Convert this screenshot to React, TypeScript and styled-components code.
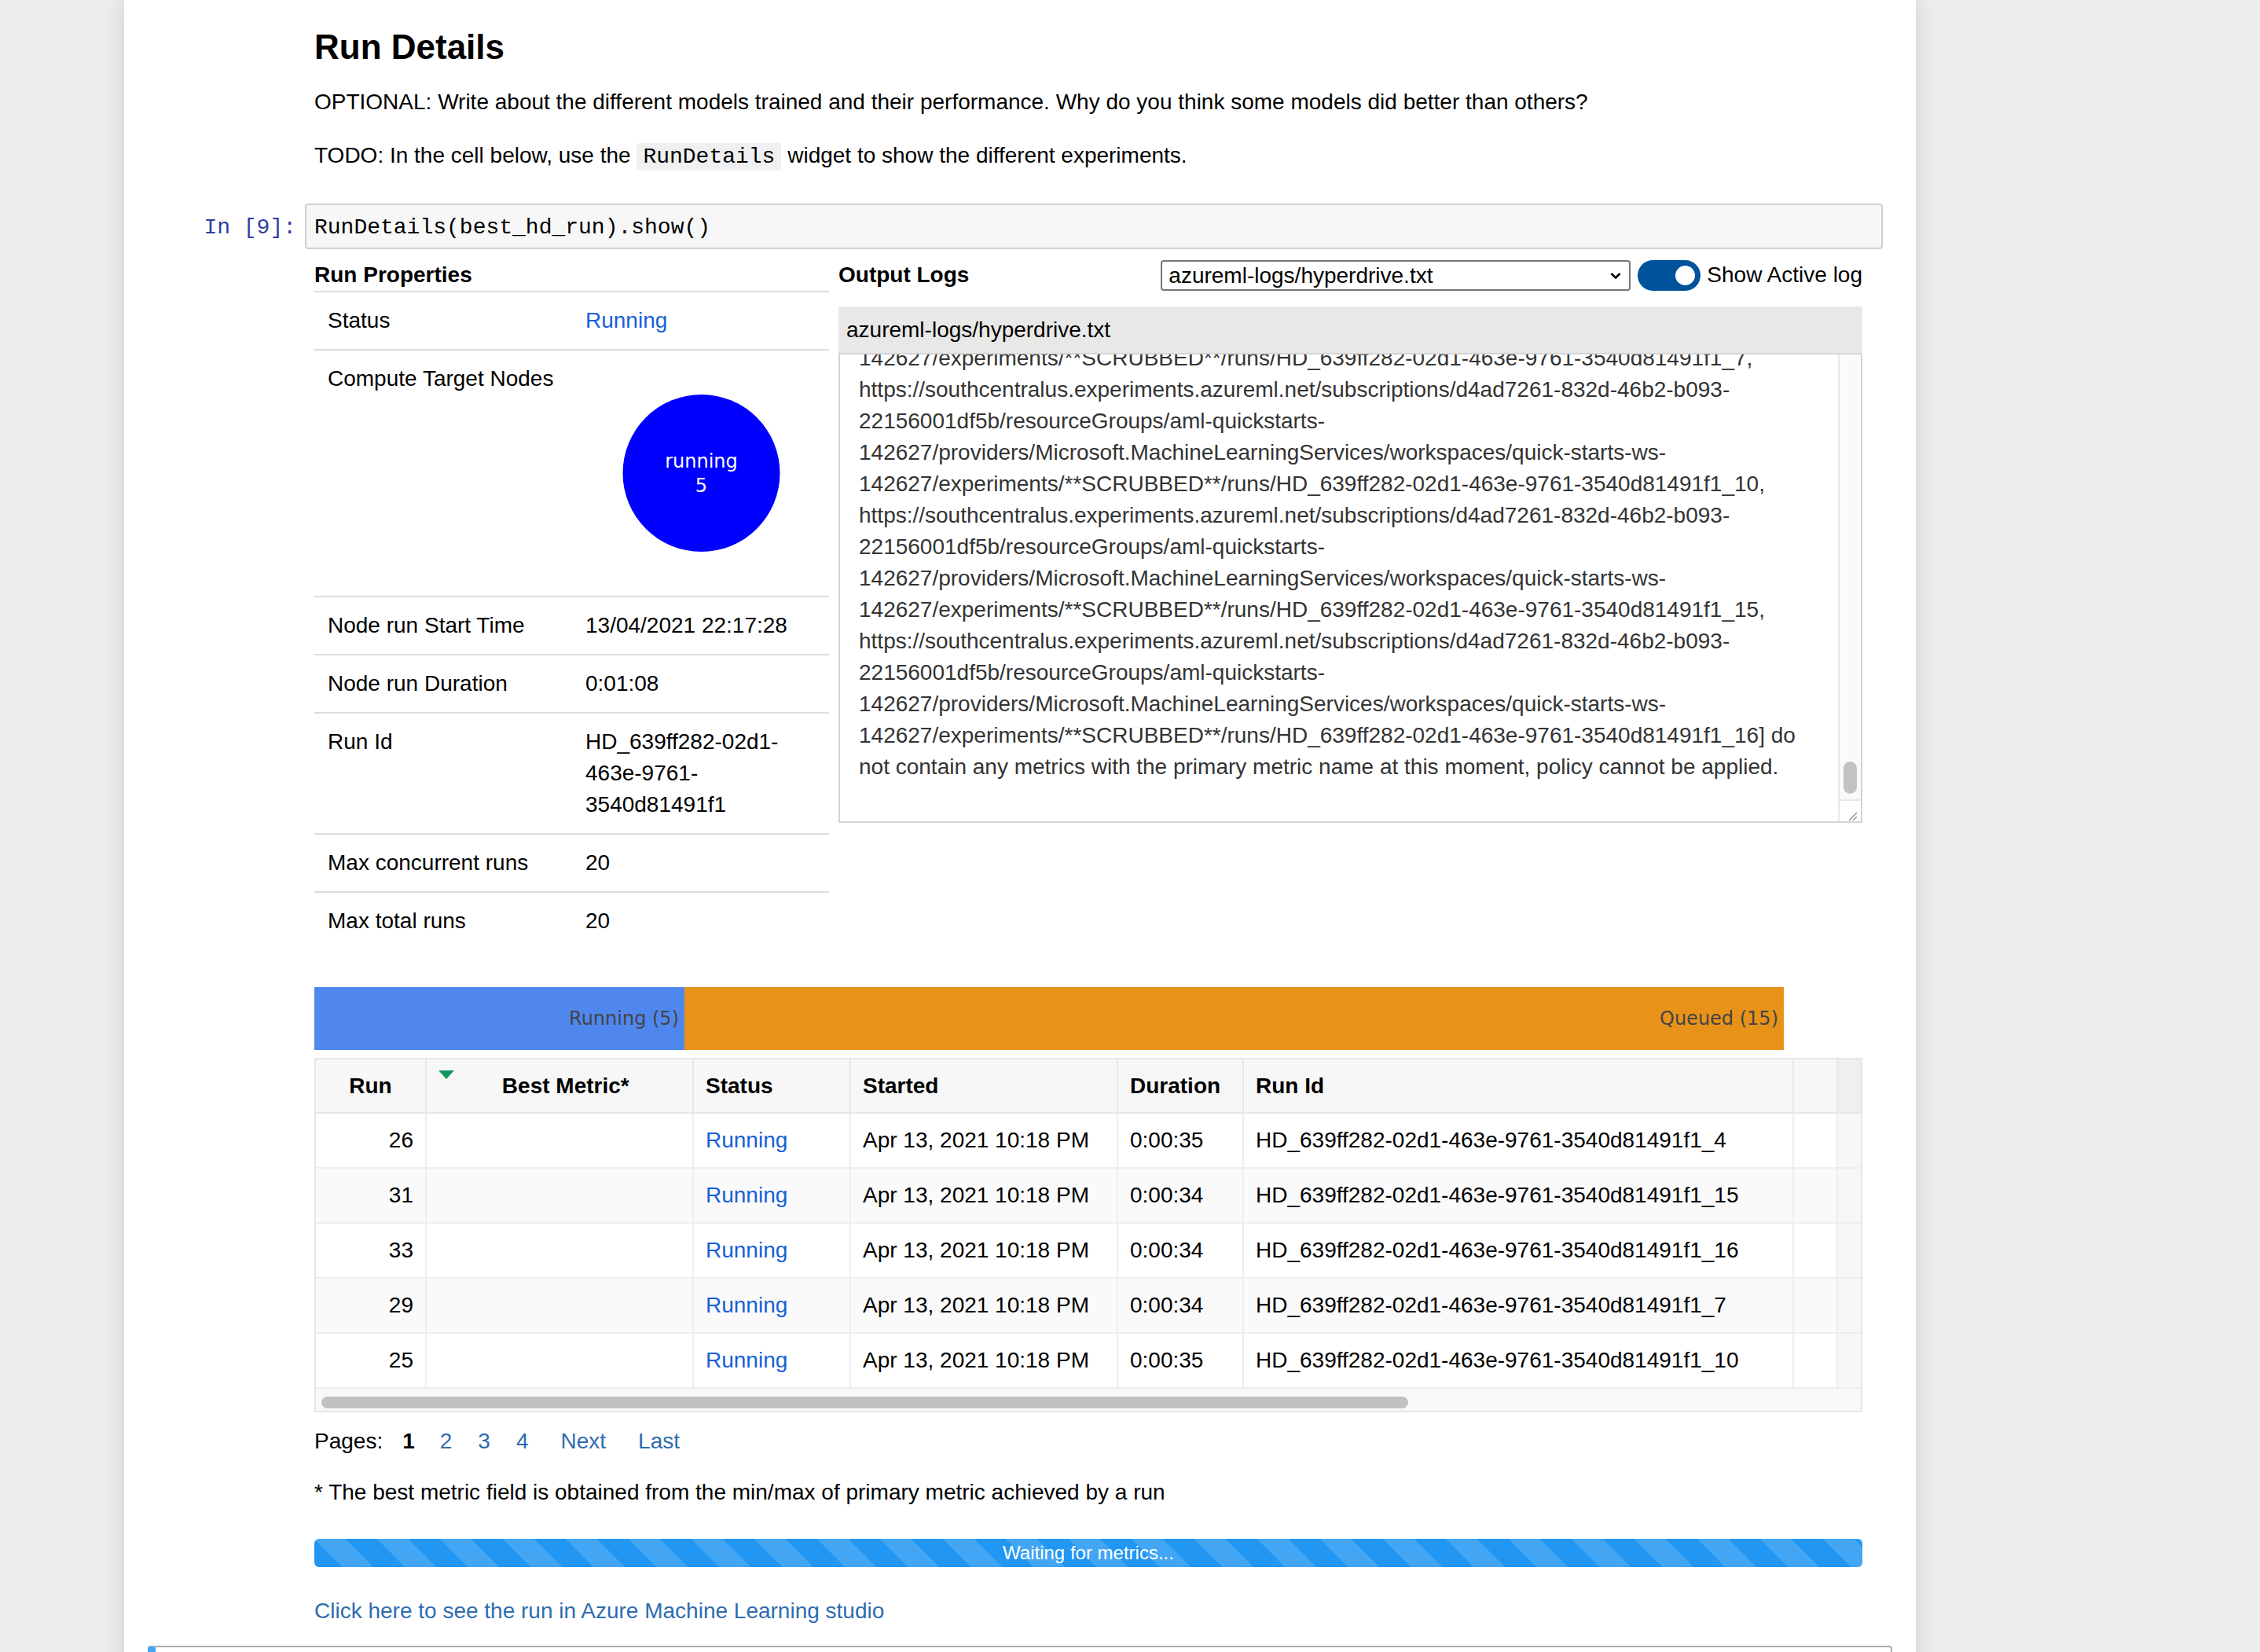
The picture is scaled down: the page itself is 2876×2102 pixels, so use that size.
import React from "react";
import styled, { createGlobalStyle } from "styled-components";

const sans = `"Liberation Sans", Arial, Helvetica, sans-serif`;
const mono = `"Liberation Mono", "Courier New", monospace`;
const verdana = `"DejaVu Sans", Verdana, sans-serif`;
const linkBlue = "#2d6cb0";
const runBlue = "#1660d8";
const cols = "141px 340px 200px 340px 160px 700px 56px 1fr";

const GlobalStyle = createGlobalStyle`
  * { box-sizing: border-box; }
  html, body { margin: 0; padding: 0; background: #eeeeee; }
  body { font-family: ${sans}; font-size: 28px; line-height: 40px; color: #000; }
`;

const Page = styled.div`
  display: flex;
  min-height: 2102px;
`;

const Notebook = styled.main`
  margin-left: 158px;
  width: 2280px;
  min-height: 2102px;
  background: #fff;
  box-shadow: 0 0 24px 2px rgba(87, 87, 87, 0.2);
  padding: 0 30px;
  display: flex;
  flex-direction: column;
  overflow: hidden;
`;

const MarkdownCell = styled.section`
  display: flex;
  flex-direction: column;
  padding: 0 12px 0 212px;
`;

const Heading = styled.h2`
  margin: 36px 0 0;
  font-size: 44px;
  line-height: 48px;
  font-weight: 700;
`;

const Para = styled.p<{ $gap: number }>`
  margin: ${(p) => p.$gap}px 0 0;
  font-size: 28px;
  line-height: 40px;
`;

const InlineCode = styled.code`
  font-family: ${mono};
  font-size: 28px;
  background: #eff0f1;
  padding: 2px 8px;
  border-radius: 4px;
`;

const CodeCell = styled.section`
  display: flex;
  margin-top: 39px;
  padding: 0 12px;
`;

const Prompt = styled.div`
  flex: none;
  width: 188px;
  padding: 14px 11px 0 0;
  text-align: right;
  font-family: ${mono};
  font-size: 28px;
  line-height: 34px;
  color: #303f9f;
`;

const InputArea = styled.div`
  flex: 1;
  height: 58px;
  border: 2px solid #cfcfcf;
  border-radius: 4px;
  background: #f7f7f7;
  padding: 12px 10px 0;
  font-family: ${mono};
  font-size: 28px;
  line-height: 34px;
`;

const Output = styled.section`
  display: flex;
  flex-direction: column;
  margin-top: 13px;
  padding: 0 38px 0 212px;
`;

const WidgetTop = styled.div`
  display: grid;
  grid-template-columns: 655px 1fr;
  column-gap: 12px;
  align-items: start;
`;

const Panel = styled.div`
  display: flex;
  flex-direction: column;
`;

const PanelTitle = styled.div<{ $rule?: boolean }>`
  font-weight: 700;
  line-height: 40px;
  border-bottom: ${(p) => (p.$rule ? "2px solid #dddddd" : "none")};
`;

const PropRow = styled.div`
  display: grid;
  grid-template-columns: 345px 1fr;
  padding: 16px 0;
  border-bottom: 2px solid #dddddd;
  &:last-child {
    border-bottom: none;
  }
`;

const PropLabel = styled.div`
  padding-left: 17px;
`;

const PropValue = styled.div<{ $status?: boolean }>`
  color: ${(p) => (p.$status ? runBlue : "#000")};
`;

const ChartSvg = styled.svg`
  display: block;
`;

const LogsHeader = styled.div`
  display: flex;
  align-items: center;
  height: 40px;
`;

const LogsTitle = styled.div`
  flex: 1;
  font-weight: 700;
`;

const SelectWrap = styled.div`
  position: relative;
  width: 598px;
  height: 39px;
`;

const LogSelect = styled.select`
  appearance: none;
  width: 100%;
  height: 100%;
  border: 2px solid #767676;
  border-radius: 4px;
  background: #fff;
  padding: 0 40px 0 8px;
  font-family: ${sans};
  font-size: 28px;
  color: #000;
`;

const Chevron = styled.svg`
  position: absolute;
  right: 12px;
  top: 15px;
  pointer-events: none;
`;

const Toggle = styled.span`
  position: relative;
  flex: none;
  width: 80px;
  height: 39px;
  margin-left: 9px;
  border-radius: 20px;
  background: #00539b;
`;

const Knob = styled.span`
  position: absolute;
  right: 7px;
  top: 7px;
  width: 25px;
  height: 25px;
  border-radius: 50%;
  background: #fff;
`;

const ToggleLabel = styled.span`
  margin-left: 8px;
  white-space: nowrap;
`;

const LogTitleBar = styled.div`
  margin-top: 20px;
  height: 59px;
  background: #e8e8e7;
  padding-left: 10px;
  display: flex;
  align-items: center;
`;

const LogBox = styled.div`
  position: relative;
  height: 598px;
  border: 2px solid #d4d4d4;
  overflow: hidden;
`;

const LogText = styled.div`
  margin-top: -15px;
  padding: 0 40px 0 24px;
  color: #333;
  line-height: 40px;
  white-space: nowrap;
`;

const ScrollTrack = styled.div`
  position: absolute;
  right: 0;
  top: 0;
  bottom: 28px;
  width: 29px;
  border-left: 2px solid #e8e8e8;
  background: #fafafa;
`;

const ScrollThumb = styled.div`
  position: absolute;
  left: 5px;
  bottom: 7px;
  width: 17px;
  height: 41px;
  border-radius: 9px;
  background: #c2c2c2;
`;

const ResizeCorner = styled.div`
  position: absolute;
  right: 0;
  bottom: 0;
  width: 29px;
  height: 28px;
  border-left: 2px solid #e8e8e8;
  border-top: 2px solid #e8e8e8;
  background: #fff;
`;

const StatusBar = styled.div`
  margin-top: 48px;
  width: 1870px;
  height: 80px;
  display: flex;
`;

const StatusSegment = styled.div<{ $color: string; $grow: number }>`
  flex: ${(p) => p.$grow};
  background: ${(p) => p.$color};
  display: flex;
  align-items: center;
  justify-content: flex-end;
  padding-right: 7px;
  font-family: ${verdana};
  font-size: 24px;
  color: #444;
`;

const RunsTable = styled.div`
  margin-top: 10px;
  border: 2px solid #e6e6e6;
  display: flex;
  flex-direction: column;
`;

const HeaderRow = styled.div`
  display: grid;
  grid-template-columns: ${cols};
  height: 69px;
  background: #f7f7f7;
  border-bottom: 2px solid #e6e6e6;
  font-weight: 700;
`;

const HeaderCell = styled.div<{ $align?: "center" | "left" }>`
  position: relative;
  display: flex;
  align-items: center;
  justify-content: ${(p) => (p.$align === "center" ? "center" : "flex-start")};
  padding: 0 15px;
  border-right: 2px solid #e8e8e8;
`;

const SortArrow = styled.svg`
  position: absolute;
  left: 15px;
  top: 14px;
`;

const Gutter = styled.div<{ $head?: boolean }>`
  background: ${(p) => (p.$head ? "#efefef" : "#f7f7f7")};
`;

const BodyRow = styled.div<{ $alt: boolean }>`
  display: grid;
  grid-template-columns: ${cols};
  height: 70px;
  background: ${(p) => (p.$alt ? "#fafafa" : "#fff")};
  border-bottom: 2px solid #eeeeee;
`;

const Cell = styled.div<{ $align?: "right" | "left"; $status?: boolean }>`
  display: flex;
  align-items: center;
  justify-content: ${(p) => (p.$align === "right" ? "flex-end" : "flex-start")};
  padding: 0 15px 0 ${(p) => (p.$align === "right" ? 0 : 15)}px;
  border-right: 2px solid #eeeeee;
  color: ${(p) => (p.$status ? runBlue : "#000")};
  white-space: nowrap;
`;

const HScroll = styled.div`
  height: 28px;
  background: #f8f8f8;
  padding: 10px 0 0 7px;
`;

const HThumb = styled.div`
  width: 1383px;
  height: 15px;
  border-radius: 8px;
  background: #c1c1c1;
`;

const PagesRow = styled.div`
  margin-top: 17px;
  display: flex;
  line-height: 40px;
`;

const PageItem = styled.span<{ $gap: number; $current?: boolean }>`
  margin-left: ${(p) => p.$gap}px;
  color: ${(p) => (p.$current ? "#000" : linkBlue)};
  font-weight: ${(p) => (p.$current ? 700 : 400)};
`;

const Footnote = styled.div`
  margin-top: 25px;
  line-height: 40px;
`;

const WaitingBar = styled.div`
  margin-top: 39px;
  height: 36px;
  border-radius: 6px;
  background-color: #2196f3;
  background-image: linear-gradient(
    45deg,
    rgba(255, 255, 255, 0.15) 25%,
    transparent 25%,
    transparent 50%,
    rgba(255, 255, 255, 0.15) 50%,
    rgba(255, 255, 255, 0.15) 75%,
    transparent 75%,
    transparent
  );
  background-size: 80px 80px;
  color: #fff;
  font-size: 24px;
  line-height: 36px;
  text-align: center;
`;

const StudioLink = styled.a`
  margin-top: 36px;
  line-height: 40px;
  color: ${linkBlue};
  text-decoration: none;
  align-self: flex-start;
`;

const NextCell = styled.section`
  margin-top: 24px;
  height: 220px;
  flex: none;
  border: 2px solid #ababab;
  border-left: 10px solid #42a5f5;
  border-radius: 4px;
`;

const logLines = [
  "142627/experiments/**SCRUBBED**/runs/HD_639ff282-02d1-463e-9761-3540d81491f1_7,",
  "https://southcentralus.experiments.azureml.net/subscriptions/d4ad7261-832d-46b2-b093-",
  "22156001df5b/resourceGroups/aml-quickstarts-",
  "142627/providers/Microsoft.MachineLearningServices/workspaces/quick-starts-ws-",
  "142627/experiments/**SCRUBBED**/runs/HD_639ff282-02d1-463e-9761-3540d81491f1_10,",
  "https://southcentralus.experiments.azureml.net/subscriptions/d4ad7261-832d-46b2-b093-",
  "22156001df5b/resourceGroups/aml-quickstarts-",
  "142627/providers/Microsoft.MachineLearningServices/workspaces/quick-starts-ws-",
  "142627/experiments/**SCRUBBED**/runs/HD_639ff282-02d1-463e-9761-3540d81491f1_15,",
  "https://southcentralus.experiments.azureml.net/subscriptions/d4ad7261-832d-46b2-b093-",
  "22156001df5b/resourceGroups/aml-quickstarts-",
  "142627/providers/Microsoft.MachineLearningServices/workspaces/quick-starts-ws-",
  "142627/experiments/**SCRUBBED**/runs/HD_639ff282-02d1-463e-9761-3540d81491f1_16] do",
  "not contain any metrics with the primary metric name at this moment, policy cannot be applied.",
];

const runs = [
  { run: 26, duration: "0:00:35", id: "HD_639ff282-02d1-463e-9761-3540d81491f1_4" },
  { run: 31, duration: "0:00:34", id: "HD_639ff282-02d1-463e-9761-3540d81491f1_15" },
  { run: 33, duration: "0:00:34", id: "HD_639ff282-02d1-463e-9761-3540d81491f1_16" },
  { run: 29, duration: "0:00:34", id: "HD_639ff282-02d1-463e-9761-3540d81491f1_7" },
  { run: 25, duration: "0:00:35", id: "HD_639ff282-02d1-463e-9761-3540d81491f1_10" },
];

function NodesChart() {
  return (
    <ChartSvg width="295" height="280" viewBox="0 0 295 280">
      <circle cx="147.5" cy="140" r="100" fill="#0000ff" />
      <text x="147.5" y="133" fill="#fff" fontFamily={verdana} fontSize="24" textAnchor="middle">
        running
      </text>
      <text x="147.5" y="164" fill="#fff" fontFamily={verdana} fontSize="24" textAnchor="middle">
        5
      </text>
    </ChartSvg>
  );
}

export default function App() {
  return (
    <Page>
      <GlobalStyle />
      <Notebook>
        <MarkdownCell>
          <Heading>Run Details</Heading>
          <Para $gap={26}>
            OPTIONAL: Write about the different models trained and their performance. Why do you think some
            models did better than others?
          </Para>
          <Para $gap={28}>
            TODO: In the cell below, use the <InlineCode>RunDetails</InlineCode> widget to show the different
            experiments.
          </Para>
        </MarkdownCell>

        <CodeCell>
          <Prompt>In&nbsp;[9]:</Prompt>
          <InputArea>RunDetails(best_hd_run).show()</InputArea>
        </CodeCell>

        <Output>
          <WidgetTop>
            <Panel>
              <PanelTitle $rule>Run Properties</PanelTitle>
              <PropRow>
                <PropLabel>Status</PropLabel>
                <PropValue $status>Running</PropValue>
              </PropRow>
              <PropRow>
                <PropLabel>Compute Target Nodes</PropLabel>
                <PropValue>
                  <NodesChart />
                </PropValue>
              </PropRow>
              <PropRow>
                <PropLabel>Node run Start Time</PropLabel>
                <PropValue>13/04/2021 22:17:28</PropValue>
              </PropRow>
              <PropRow>
                <PropLabel>Node run Duration</PropLabel>
                <PropValue>0:01:08</PropValue>
              </PropRow>
              <PropRow>
                <PropLabel>Run Id</PropLabel>
                <PropValue>
                  HD_639ff282-02d1-
                  <br />
                  463e-9761-
                  <br />
                  3540d81491f1
                </PropValue>
              </PropRow>
              <PropRow>
                <PropLabel>Max concurrent runs</PropLabel>
                <PropValue>20</PropValue>
              </PropRow>
              <PropRow>
                <PropLabel>Max total runs</PropLabel>
                <PropValue>20</PropValue>
              </PropRow>
            </Panel>

            <Panel>
              <LogsHeader>
                <LogsTitle>Output Logs</LogsTitle>
                <SelectWrap>
                  <LogSelect defaultValue="hyperdrive">
                    <option value="hyperdrive">azureml-logs/hyperdrive.txt</option>
                  </LogSelect>
                  <Chevron width="14" height="10" viewBox="0 0 14 10">
                    <path d="M1.5 2 L7 7.5 L12.5 2" fill="none" stroke="#000" strokeWidth="2.6" />
                  </Chevron>
                </SelectWrap>
                <Toggle>
                  <Knob />
                </Toggle>
                <ToggleLabel>Show Active log</ToggleLabel>
              </LogsHeader>
              <LogTitleBar>azureml-logs/hyperdrive.txt</LogTitleBar>
              <LogBox>
                <LogText>
                  {logLines.map((line, i) => (
                    <div key={i}>{line}</div>
                  ))}
                </LogText>
                <ScrollTrack>
                  <ScrollThumb />
                </ScrollTrack>
                <ResizeCorner>
                  <svg width="27" height="26" viewBox="0 0 27 26">
                    <path d="M12 22 L22 12 M17 22 L22 17" stroke="#9a9a9a" strokeWidth="1.6" fill="none" />
                  </svg>
                </ResizeCorner>
              </LogBox>
            </Panel>
          </WidgetTop>

          <StatusBar>
            <StatusSegment $color="#4f87ef" $grow={5}>
              Running (5)
            </StatusSegment>
            <StatusSegment $color="#e8921a" $grow={15}>
              Queued (15)
            </StatusSegment>
          </StatusBar>

          <RunsTable>
            <HeaderRow>
              <HeaderCell $align="center">Run</HeaderCell>
              <HeaderCell $align="center">
                <SortArrow width="20" height="11" viewBox="0 0 20 11">
                  <path d="M0 0 H20 L10 11 Z" fill="#12985f" />
                </SortArrow>
                &nbsp;&nbsp;Best Metric*
              </HeaderCell>
              <HeaderCell>Status</HeaderCell>
              <HeaderCell>Started</HeaderCell>
              <HeaderCell>Duration</HeaderCell>
              <HeaderCell>Run Id</HeaderCell>
              <HeaderCell />
              <Gutter $head />
            </HeaderRow>
            {runs.map((r, i) => (
              <BodyRow key={r.id} $alt={i % 2 === 1}>
                <Cell $align="right">{r.run}</Cell>
                <Cell />
                <Cell $status>Running</Cell>
                <Cell>Apr 13, 2021 10:18 PM</Cell>
                <Cell>{r.duration}</Cell>
                <Cell>{r.id}</Cell>
                <Cell />
                <Gutter />
              </BodyRow>
            ))}
            <HScroll>
              <HThumb />
            </HScroll>
          </RunsTable>

          <PagesRow>
            <span>Pages:</span>
            <PageItem $gap={25} $current>
              1
            </PageItem>
            <PageItem $gap={32}>2</PageItem>
            <PageItem $gap={33}>3</PageItem>
            <PageItem $gap={33}>4</PageItem>
            <PageItem $gap={41}>Next</PageItem>
            <PageItem $gap={41}>Last</PageItem>
          </PagesRow>

          <Footnote>* The best metric field is obtained from the min/max of primary metric achieved by a run</Footnote>

          <WaitingBar>Waiting for metrics...</WaitingBar>

          <StudioLink href="#">Click here to see the run in Azure Machine Learning studio</StudioLink>
        </Output>

        <NextCell />
      </Notebook>
    </Page>
  );
}
